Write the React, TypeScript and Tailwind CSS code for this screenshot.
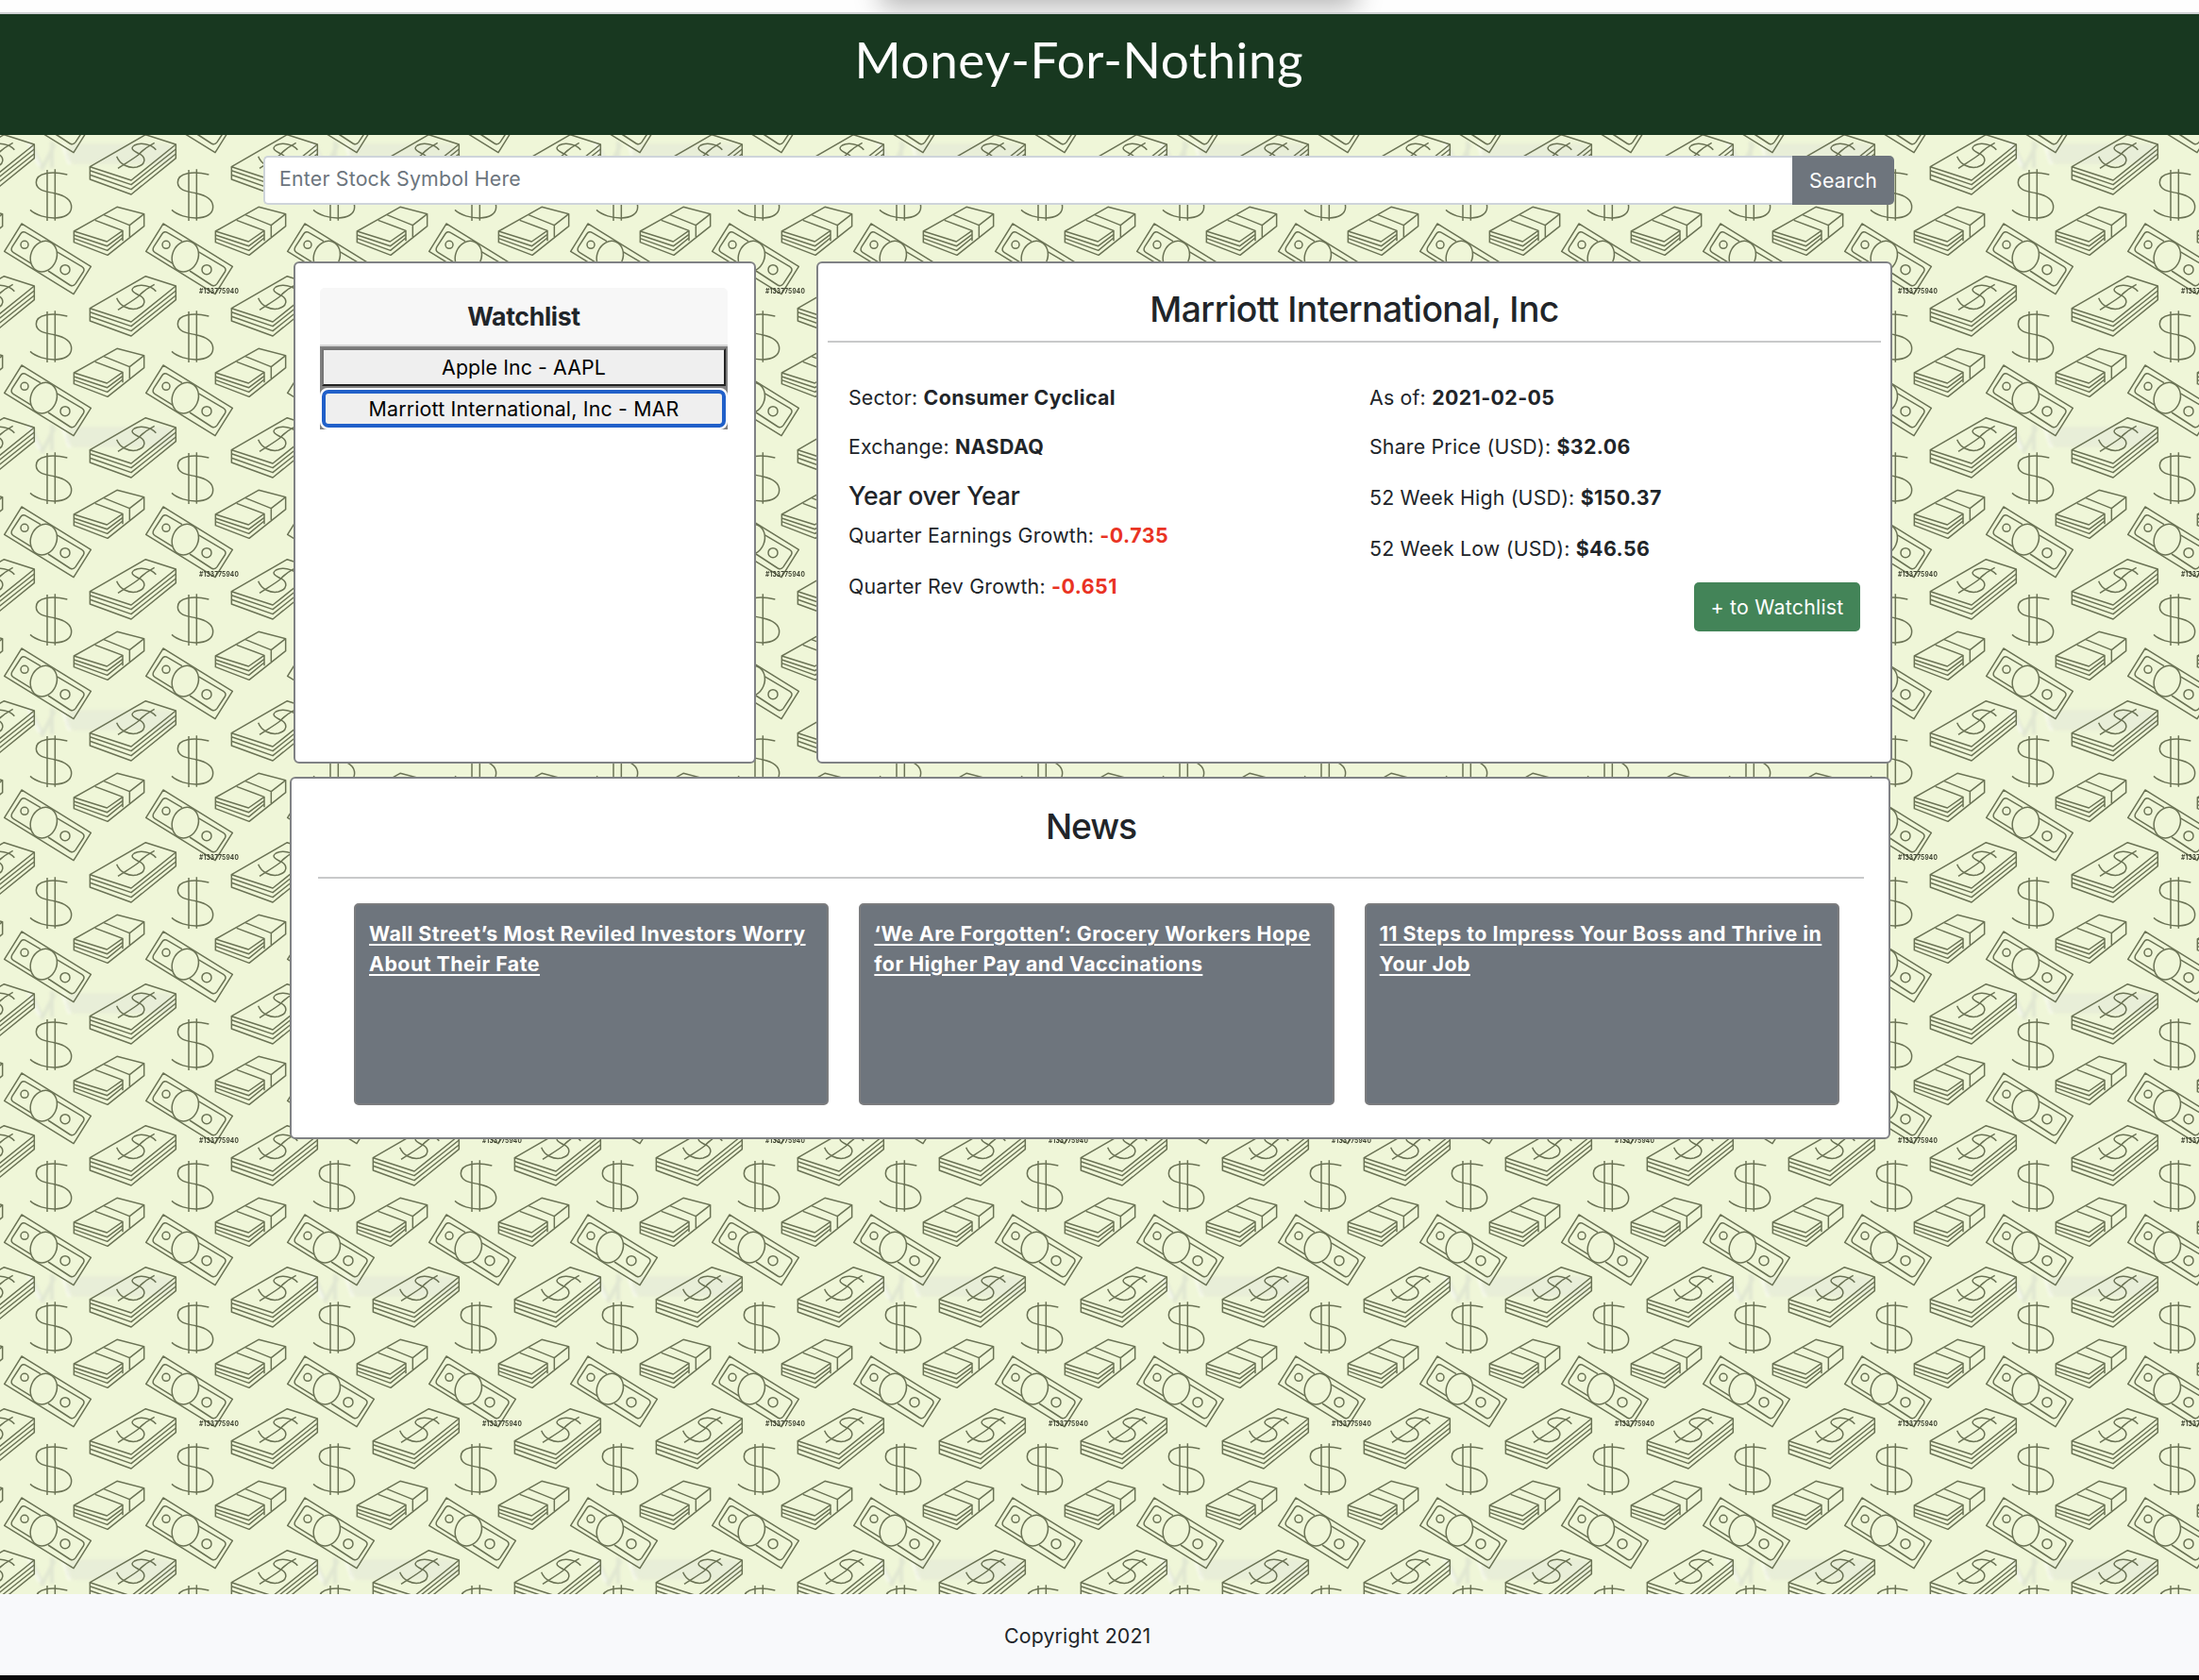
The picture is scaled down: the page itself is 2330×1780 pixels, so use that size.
import React from "react";

const INK = "#6a7254";
const PAPER = "#eff6d8";

function MoneyMotif() {
  return (
    <g id="motif" fill="none" stroke={INK} strokeWidth="4.5" strokeLinejoin="round">
      <path d="M69 441L289 577L234 665L14 529Z" />
      <path d="M129 497L83 470Q72 463 65 474L39 514Q32 526 43 533L100 568" />
      <path d="M180 530L260 577Q271 584 265 594L240 632Q233 642 222 636L153 591" />
      <ellipse cx="139" cy="545" rx="41" ry="50" transform="rotate(22 139 545)" fill={PAPER} />
      <circle cx="78" cy="508" r="12" />
      <circle cx="207" cy="587" r="15" />

      <path d="M463 608L559 639L417 753L286 710Z" />
      <path d="M286 710V750L417 798L559 683V639" />
      <path d="M286 722L417 767L559 654M286 736L417 782L559 669" />
      <path d="M371 677C381 703 410 716 435 711C465 703 463 681 447 671C424 660 412 652 427 642C445 632 480 637 496 656" />
      <path d="M375 715C395 701 420 688 440 672C455 655 472 644 491 634" />

      <path d="M150 720V882M175 718V881" />
      <path d="M214 735C165 724 115 728 115 760C115 786 148 789 172 794C208 801 227 816 227 838C227 885 132 881 96 847" />

      <path d="M235 465L372 388L458 410V449L342 541L235 500Z" />
      <path d="M302 430L390 463L340 498L235 465M330 413L412 446L458 410M412 446V483M390 463V496" />
      <path d="M235 477L341 512L390 475M235 488L341 526L390 486" />
    </g>
  );
}

function MoneyBackground() {
  const offsets = [-450, 0, 450];
  return (
    <svg className="absolute inset-0 h-full w-full" aria-hidden="true">
      <defs>
        <MoneyMotif />
        <filter id="haze">
          <feGaussianBlur stdDeviation="1.5" />
        </filter>
        <pattern id="bills" x="0" y="-53" width="150" height="150" patternUnits="userSpaceOnUse">
          <g transform="scale(0.33333)">
            {offsets.map((x) => [-900, -450, 0].map((y) => <use key={`${x}${y}`} href="#motif" x={x} y={y} />))}
          </g>
        </pattern>
        <pattern id="smudges" x="0" y="-143" width="300" height="300" patternUnits="userSpaceOnUse">
          <g filter="url(#haze)" fill="none" strokeWidth="4">
            <path d="M33 153L45 178L58 153M55 150V178" stroke="#dde3d0" strokeOpacity="0.8" />
            <path d="M30 150L42 176M66 152L74 174" stroke="#ffffff" strokeOpacity="0.5" />
          </g>
          <rect x="70" y="152" width="115" height="22" rx="10" fill="#e0e4d6" opacity="0.45" filter="url(#haze)" />
        </pattern>
        <pattern id="serials" x="0" y="-143" width="300" height="300" patternUnits="userSpaceOnUse">
          <text x="211" y="11" fontSize="7.5" fontWeight="700" textLength="42" lengthAdjust="spacingAndGlyphs" fill="#3d4230">
            #133775940
          </text>
        </pattern>
      </defs>
      <rect width="100%" height="100%" fill={PAPER} />
      <rect width="100%" height="100%" fill="url(#smudges)" />
      <rect width="100%" height="100%" fill="url(#bills)" />
      <rect width="100%" height="100%" fill="url(#serials)" />
    </svg>
  );
}

function Fact({ label, value, className = "", negative = false }: { label: string; value: string; className?: string; negative?: boolean }) {
  return (
    <p className={`whitespace-nowrap ${className}`}>
      {label}:{" "}
      <b className={negative ? "font-bold tracking-[0.5px] text-[#e93323]" : "font-bold tracking-[0.4px]"}>{value}</b>
    </p>
  );
}

const news = [
  ["Wall Street’s Most Reviled Investors Worry", "About Their Fate"],
  ["‘We Are Forgotten’: Grocery Workers Hope", "for Higher Pay and Vaccinations"],
  ["11 Steps to Impress Your Boss and Thrive in", "Your Job"],
];

export default function App() {
  return (
    <div className="flex h-[1780px] w-[2330px] flex-col overflow-hidden bg-white font-['Inter',sans-serif] text-[21.33px] leading-8 tracking-[0.19px] text-[#212529]">
      <div className="relative h-[15px] shrink-0 overflow-hidden border-b-2 border-[#cfd1d3] bg-[#fefefe]">
        <div className="absolute -top-[30px] left-[945px] h-[26px] w-[480px] shadow-[0_0_28px_12px_rgba(0,0,0,0.28)]" />
      </div>
      <header className="flex h-32 shrink-0 justify-center bg-[#183820]">
        <h1 className="mr-[41px] mt-4 w-[478px] whitespace-nowrap font-[Papyrus,Lato,sans-serif] text-[53px] leading-[64px] tracking-[0.6px] text-white">
          Money-For-Nothing
        </h1>
      </header>

      <main className="relative h-[1546px] shrink-0">
        <MoneyBackground />
        <div className="relative ml-[279px] w-[1728px] pt-[22px]">
          <div className="flex h-[52px]">
            <div className="flex-1 rounded-l-[5px] border-2 border-r-0 border-[#ced4da] bg-white pl-[15px] pt-[6px] text-[#6c757d]">
              Enter Stock Symbol Here
            </div>
            <button className="w-[108px] rounded-r-[5px] bg-[#6e757d] text-white">Search</button>
          </div>

          <div className="mt-[60px] flex h-[532px] pl-8">
            <section className="w-[490px] rounded-[6px] border-2 border-[#808285] bg-white pl-[26px] pr-7 pt-[26px] text-center">
              <h2 className="h-[62px] rounded-t-[5px] border-b-2 border-[#d6d6d6] bg-[#f7f7f7] pt-[14px] text-[26.67px] font-bold tracking-[-0.35px]">
                Watchlist
              </h2>
              <div className="h-[44px] border-2 border-[#808080]">
                <button className="flex h-full w-full items-center justify-center border-2 border-b-[#222] border-l-[#767676] border-r-[#222] border-t-[#767676] bg-[#efefef] tracking-[0.1px] text-black">
                  Apple Inc - AAPL
                </button>
              </div>
              <div className="h-[44px] bg-[#808080]">
                <button className="flex h-full w-full items-center justify-center rounded-[8px] border-2 border-white bg-white text-black">
                  <span className="flex h-full w-full items-center justify-center rounded-[7px] border-4 border-[#2160c9] bg-[#efefef]">
                    Marriott International, Inc - MAR
                  </span>
                </button>
              </div>
            </section>

            <section className="ml-16 w-[1140px] rounded-[6px] border-2 border-[#808285] bg-white px-[10px]">
              <h2 className="h-[84px] border-b-2 border-[#c8c9ca] pt-[26px] text-center text-[37.33px] font-medium leading-[45px] tracking-[-0.6px]">
                Marriott International, Inc
              </h2>
              <div className="flex px-[22px] pt-[42px]">
                <div className="w-[552px]">
                  <Fact label="Sector" value="Consumer Cyclical" />
                  <Fact label="Exchange" value="NASDAQ" className="mt-5" />
                  <h3 className="mt-5 text-[26.67px] font-medium leading-8 tracking-[-0.3px]">Year over Year</h3>
                  <Fact label="Quarter Earnings Growth" value="-0.735" className="mt-[10px]" negative />
                  <Fact label="Quarter Rev Growth" value="-0.651" className="mt-[22px]" negative />
                </div>
                <div className="flex-1">
                  <Fact label="As of" value="2021-02-05" />
                  <Fact label="Share Price (USD)" value="$32.06" className="mt-5" />
                  <Fact label="52 Week High (USD)" value="$150.37" className="mt-[22px]" />
                  <Fact label="52 Week Low (USD)" value="$46.56" className="mt-[22px]" />
                  <button className="ml-auto mt-[20px] block h-[52px] w-[176px] rounded-[5px] bg-[#438458] tracking-[0.25px] text-white">
                    + to Watchlist
                  </button>
                </div>
              </div>
            </section>
          </div>

          <section className="ml-[28px] mt-[14px] h-[384px] w-[1696px] rounded-[6px] border-2 border-[#808285] bg-white pl-7 pr-[26px]">
            <h2 className="h-[106px] border-b-2 border-[#c8c9ca] pt-[28px] text-center text-[37.33px] font-medium leading-[45px] tracking-[-1.1px]">
              News
            </h2>
            <div className="flex gap-8 pl-[38px] pr-[26px] pt-[26px]">
              {news.map(([a, b]) => (
                <article
                  key={a}
                  className="h-[214px] flex-1 whitespace-nowrap rounded-[5px] border-2 border-[#7b7c7e] bg-[#6e757d] px-[14px] pt-[14px] font-bold tracking-[0.49px] text-white underline decoration-2 underline-offset-[3px]"
                >
                  <div>{a}</div>
                  <div>{b}</div>
                </article>
              ))}
            </div>
          </section>
        </div>
      </main>

      <footer className="h-[86px] shrink-0 bg-[#f8f9fb] pl-[1064px] pt-[28px] tracking-[0.15px]">Copyright 2021</footer>
      <div className="h-[5px] shrink-0 bg-[#0a0a0a]" />
    </div>
  );
}
